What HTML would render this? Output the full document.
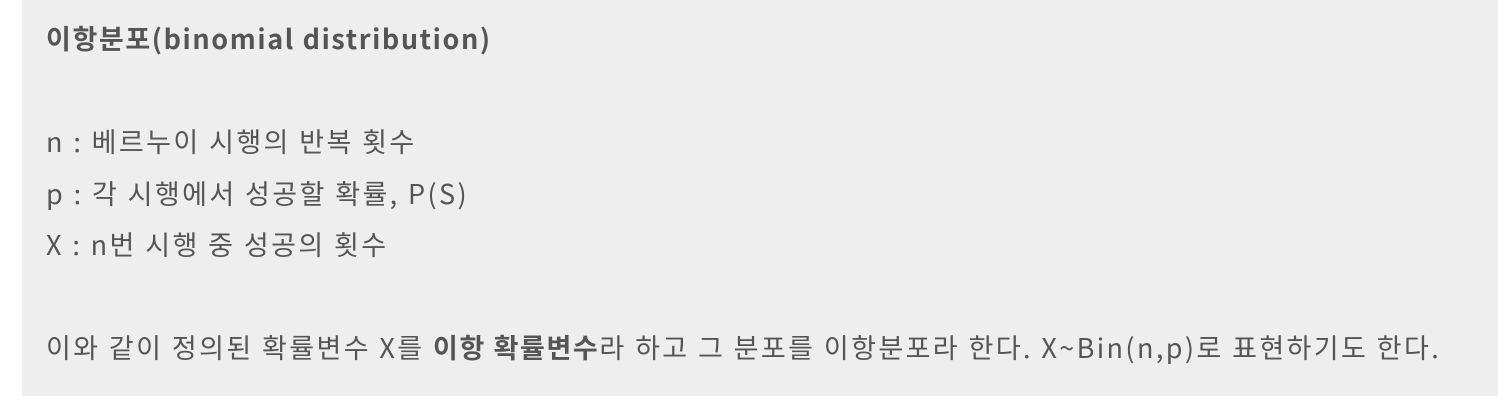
<!DOCTYPE html>
<html><head><meta charset="utf-8"><style>
html,body{margin:0;padding:0;background:#fff;width:1498px;height:416px;overflow:hidden}
.box{position:absolute;left:22px;top:0;width:1476px;height:396px;background:#eeeeee}
.t{position:absolute;left:46px;font-family:"Noto Sans CJK KR","Liberation Sans",sans-serif;font-size:27px;letter-spacing:2.4px;color:#555;white-space:nowrap;line-height:36px}
b{font-weight:bold;color:#555;letter-spacing:1.6px}
</style></head><body>
<div class="box"></div>
<div class="t" style="top:20px"><b>이항분포(binomial distribution)</b></div>
<div class="t" style="top:123px">n : 베르누이 시행의 반복 횟수</div>
<div class="t" style="top:175px">p : 각 시행에서 성공할 확률, P(S)</div>
<div class="t" style="top:226px">X : n번 시행 중 성공의 횟수</div>
<div class="t" style="top:329px">이와 같이 정의된 확률변수 X를 <b>이항 확률변수</b>라 하고 그 분포를 이항분포라 한다. X~Bin(n,p)로 표현하기도 한다.</div>
</body></html>
